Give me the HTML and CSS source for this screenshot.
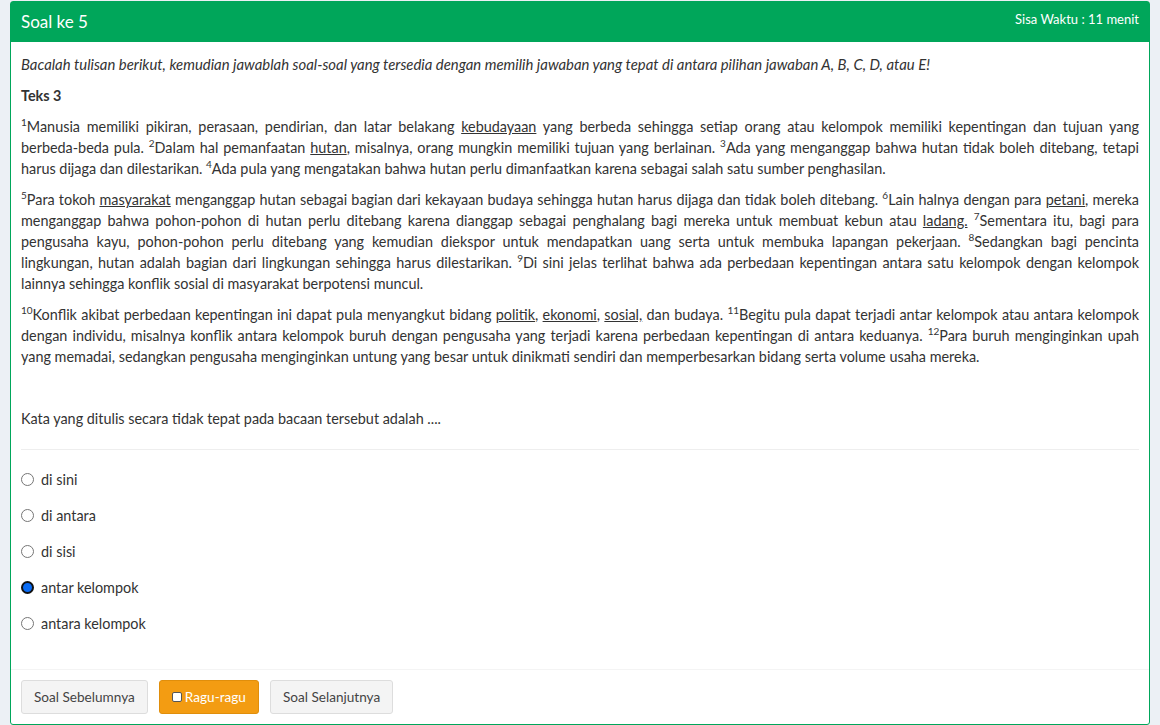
FILE: index.html
```html
<!DOCTYPE html>
<html lang="id">
<head>
<meta charset="utf-8">
<title>Soal ke 5</title>
<link rel="stylesheet" href="styles.css">
</head>
<body>
<div class="box">
  <div class="box-header">
    <h3 class="box-title">Soal ke 5</h3>
    <div class="timer">Sisa Waktu : 11 menit</div>
  </div>
  <div class="box-body">
    <p class="instr">Bacalah tulisan berikut, kemudian jawablah soal-soal yang tersedia dengan memilih jawaban yang tepat di antara pilihan jawaban A, B, C, D, atau E!</p>
    <p class="title"><b>Teks 3</b></p>
    <p class="just">
      <span class="ln"><sup>1</sup>Manusia memiliki pikiran, perasaan, pendirian, dan latar belakang <u>kebudayaan</u> yang berbeda sehingga setiap orang atau kelompok memiliki kepentingan dan tujuan yang</span>
      <span class="ln">berbeda-beda pula. <sup>2</sup>Dalam hal pemanfaatan <u>hutan</u>, misalnya, orang mungkin memiliki tujuan yang berlainan. <sup>3</sup>Ada yang menganggap bahwa hutan tidak boleh ditebang, tetapi</span>
      <span class="last">harus dijaga dan dilestarikan. <sup>4</sup>Ada pula yang mengatakan bahwa hutan perlu dimanfaatkan karena sebagai salah satu sumber penghasilan.</span>
    </p>
    <p class="just">
      <span class="ln"><sup>5</sup>Para tokoh <u>masyarakat</u> menganggap hutan sebagai bagian dari kekayaan budaya sehingga hutan harus dijaga dan tidak boleh ditebang. <sup>6</sup>Lain halnya dengan para <u>petani</u>, mereka</span>
      <span class="ln">menganggap bahwa pohon-pohon di hutan perlu ditebang karena dianggap sebagai penghalang bagi mereka untuk membuat kebun atau <u>ladang.</u> <sup>7</sup>Sementara itu, bagi para</span>
      <span class="ln">pengusaha kayu, pohon-pohon perlu ditebang yang kemudian diekspor untuk mendapatkan uang serta untuk membuka lapangan pekerjaan. <sup>8</sup>Sedangkan bagi pencinta</span>
      <span class="ln">lingkungan, hutan adalah bagian dari lingkungan sehingga harus dilestarikan. <sup>9</sup>Di sini jelas terlihat bahwa ada perbedaan kepentingan antara satu kelompok dengan kelompok</span>
      <span class="last">lainnya sehingga konflik sosial di masyarakat berpotensi muncul.</span>
    </p>
    <p class="just">
      <span class="ln"><sup>10</sup>Konflik akibat perbedaan kepentingan ini dapat pula menyangkut bidang <u>politik</u>, <u>ekonomi</u>, <u>sosial,</u> dan budaya. <sup>11</sup>Begitu pula dapat terjadi antar kelompok atau antara kelompok</span>
      <span class="ln">dengan individu, misalnya konflik antara kelompok buruh dengan pengusaha yang terjadi karena perbedaan kepentingan di antara keduanya. <sup>12</sup>Para buruh menginginkan upah</span>
      <span class="last">yang memadai, sedangkan pengusaha menginginkan untung yang besar untuk dinikmati sendiri dan memperbesarkan bidang serta volume usaha mereka.</span>
    </p>
    <p class="question">Kata yang ditulis secara tidak tepat pada bacaan tersebut adalah ....</p>
    <hr class="sep">
    <div class="options">
      <label class="opt"><input type="radio" name="jawab"> di sini</label>
      <label class="opt"><input type="radio" name="jawab"> di antara</label>
      <label class="opt"><input type="radio" name="jawab"> di sisi</label>
      <label class="opt"><input type="radio" name="jawab" checked> antar kelompok</label>
      <label class="opt"><input type="radio" name="jawab"> antara kelompok</label>
    </div>
  </div>
  <div class="box-footer">
    <button class="btn btn-default">Soal Sebelumnya</button>
    <button class="btn btn-warning"><span class="chk"></span>Ragu-ragu</button>
    <button class="btn btn-default">Soal Selanjutnya</button>
  </div>
</div>
</body>
</html>
```

FILE: styles.css
```css
html, body {
  margin: 0;
  padding: 0;
}
body {
  background: #ecf0f5;
  font-family: "Source Sans Pro", Lato, "Liberation Sans", sans-serif;
  font-size: 14.4px;
  line-height: 21px;
  color: #333;
  padding: 1px 10px 0 10px;
}
.box {
  background: #fff;
  border: 1px solid #00a65a;
  border-radius: 3px;
}
.box-header {
  background: #00a65a;
  color: #fff;
  height: 40px;
  display: flex;
  justify-content: space-between;
  align-items: flex-start;
  padding: 0 10px;
}
.box-title {
  margin: 0;
  font-size: 17px;
  font-weight: normal;
  line-height: 40px;
}
.timer {
  font-size: 13px;
  line-height: 34px;
}
.box-body {
  padding: 12px 10px 0 10px;
}
.box-body p {
  margin: 0 0 10px 0;
}
.instr {
  font-style: italic;
  font-size: 14.9px;
}
.just {
  text-align: justify;
}
.ln {
  display: block;
  text-align: justify;
  text-align-last: justify;
}
.last {
  display: block;
}
sup {
  font-size: 10px;
  line-height: 10px;
  vertical-align: top;
  position: relative;
  top: 1px;
}
.question {
  padding-top: 31px;
}
.sep {
  border: 0;
  border-top: 1px solid #eee;
  margin: 20px 0 19px 0;
}
.options {
  display: flex;
  flex-direction: column;
  padding-bottom: 20px;
}
.opt {
  height: 36px;
  display: flex;
  align-items: flex-start;
  gap: 7px;
  line-height: 21px;
}
.opt input {
  appearance: none;
  -webkit-appearance: none;
  margin: 4px 0 0 0;
  width: 13px;
  height: 13px;
  border: 1px solid #767676;
  border-radius: 50%;
  background: #fff;
  box-sizing: border-box;
}
.opt input:checked {
  border: 2px solid #111;
  background: #0a6cf5;
}
.box-footer {
  border-top: 1px solid #f4f4f4;
  padding: 10px;
  display: flex;
  gap: 11px;
}
.btn {
  font-family: inherit;
  font-size: 13.6px;
  line-height: 20px;
  padding: 6px 12px;
  border-radius: 3px;
  border: 1px solid #ddd;
  cursor: pointer;
}
.btn-default {
  background: #f4f4f4;
  color: #444;
}
.btn-warning {
  background: #f39c12;
  border-color: #e08e0b;
  color: #fff;
  display: flex;
  align-items: center;
  gap: 3px;
}
.chk {
  display: inline-block;
  width: 8px;
  height: 8px;
  border: 1px solid #555;
  border-radius: 2px;
  background: #fff;
}
```
